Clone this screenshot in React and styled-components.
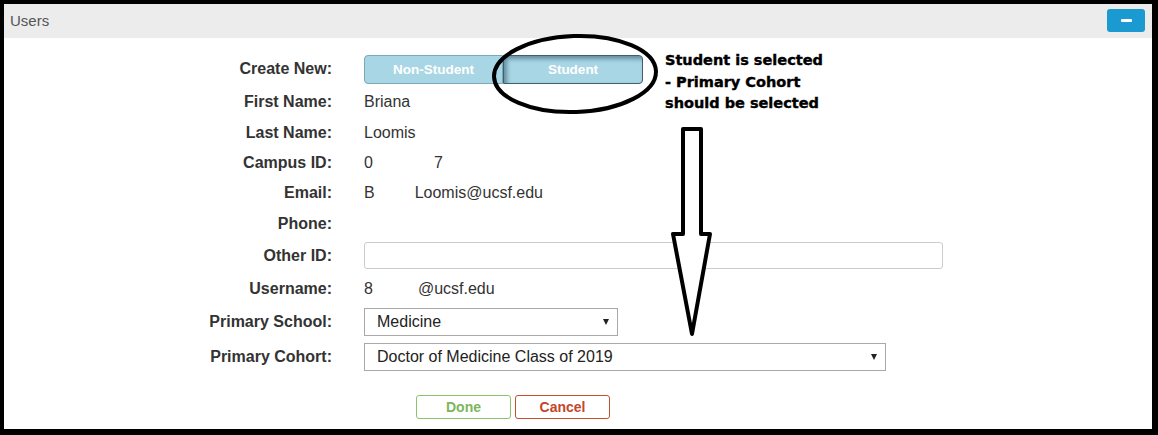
import React from "react";
import styled, { createGlobalStyle } from "styled-components";

const Global = createGlobalStyle`
  html, body {
    margin: 0;
    padding: 0;
    background: #fff;
  }
  * {
    box-sizing: border-box;
  }
`;

const Frame = styled.div`
  position: relative;
  width: 1158px;
  height: 435px;
  border-style: solid;
  border-color: #000;
  border-width: 4px 6px 6px 4px;
  background: #fff;
  font-family: "Liberation Sans", Arial, sans-serif;
  color: #333;
  overflow: hidden;
`;

const Header = styled.div`
  height: 34px;
  background: #ececec;
  display: flex;
  align-items: center;
  justify-content: space-between;
  padding: 0 7px 2px 6px;
  .title {
    font-size: 15px;
    color: #555;
  }
`;

const MinusButton = styled.button`
  width: 38px;
  height: 23px;
  border: 0;
  border-radius: 3px;
  background: #1a9ad0;
  display: flex;
  align-items: center;
  justify-content: center;
  padding: 0;
  span {
    display: block;
    width: 11px;
    height: 3px;
    background: #fff;
    border-radius: 1px;
  }
`;

const Form = styled.div`
  padding-top: 14px;
`;

const Row = styled.div`
  display: flex;
  align-items: center;
  height: ${(p) => p.$h}px;
`;

const Label = styled.div`
  box-sizing: content-box;
  width: 328px;
  padding-right: 32px;
  flex-shrink: 0;
  text-align: right;
  font-size: 16px;
  font-weight: 700;
  color: #333;
`;

const Value = styled.div`
  font-size: 16px;
  color: #333;
  display: flex;
  align-items: center;
`;

const Blank = styled.span`
  display: inline-block;
  width: ${(p) => p.$w}px;
`;

const Toggle = styled.div`
  display: flex;
`;

const ToggleButton = styled.div`
  width: ${(p) => p.$w}px;
  height: 29px;
  display: flex;
  align-items: center;
  justify-content: center;
  background: #a9d6e5;
  color: #fff;
  font-size: 13.5px;
  font-weight: 700;
  border: 1px solid ${(p) => (p.$active ? "#3f5f6c" : "#7ba9b9")};
  border-radius: ${(p) => (p.$first ? "4px 0 0 4px" : "0 4px 4px 0")};
  box-shadow: ${(p) =>
    p.$active ? "inset 3px 3px 4px rgba(40, 80, 100, 0.55)" : "none"};
`;

const TextInput = styled.div`
  width: 579px;
  height: 27px;
  border: 1px solid #ccc;
  border-radius: 3px;
  background: #fff;
`;

const Select = styled.div`
  width: ${(p) => p.$w}px;
  height: 28px;
  border: 1px solid #a9a9a9;
  background: #fff;
  display: flex;
  align-items: center;
  justify-content: space-between;
  padding: 0 8px 0 12px;
  font-size: 16px;
  color: #222;
`;

const Caret = styled.span`
  width: 0;
  height: 0;
  border-left: 3.5px solid transparent;
  border-right: 3.5px solid transparent;
  border-top: 6px solid #222;
`;

const Actions = styled.div`
  display: flex;
  gap: 4px;
  padding-left: 412px;
  margin-top: 21px;
`;

const ActionButton = styled.button`
  width: 95px;
  height: 24px;
  background: #fff;
  border: 1px solid ${(p) => p.$border};
  border-radius: 3px;
  color: ${(p) => p.$color};
  font-family: "Liberation Sans", Arial, sans-serif;
  font-size: 14px;
  font-weight: 700;
  padding: 0;
`;

const Overlay = styled.div`
  position: absolute;
  top: -4px;
  left: -4px;
  width: 1158px;
  height: 435px;
  pointer-events: none;
  svg {
    position: absolute;
    top: 0;
    left: 0;
  }
`;

const Note = styled.div`
  position: absolute;
  left: 665px;
  top: 50px;
  font-family: "DejaVu Sans", Verdana, sans-serif;
  font-weight: 700;
  font-size: 14.5px;
  line-height: 21.5px;
  color: #000;
  -webkit-text-stroke: 0.4px #000;
`;

function Annotation() {
  return (
    <Overlay>
      <svg width="1158" height="435" viewBox="0 0 1158 435">
        <ellipse
          cx="575"
          cy="74"
          rx="81"
          ry="38"
          fill="none"
          stroke="#000"
          strokeWidth="4"
          transform="rotate(-2 575 74)"
        />
        <polygon
          points="683,129 701,129 701,234 710,234 692,334 673,234 683,234"
          fill="#fff"
          stroke="#000"
          strokeWidth="4"
          strokeLinejoin="round"
        />
      </svg>
      <Note>
        Student is selected
        <br />- Primary Cohort
        <br />
        should be selected
      </Note>
    </Overlay>
  );
}

export default function App() {
  return (
    <>
      <Global />
      <Frame>
        <Header>
          <span className="title">Users</span>
          <MinusButton>
            <span />
          </MinusButton>
        </Header>

        <Form>
          <Row $h={34}>
            <Label>Create New:</Label>
            <Toggle>
              <ToggleButton $w={139} $first>
                Non-Student
              </ToggleButton>
              <ToggleButton $w={140} $active>
                Student
              </ToggleButton>
            </Toggle>
          </Row>
          <Row $h={31}>
            <Label>First Name:</Label>
            <Value>Briana</Value>
          </Row>
          <Row $h={31}>
            <Label>Last Name:</Label>
            <Value>Loomis</Value>
          </Row>
          <Row $h={30}>
            <Label>Campus ID:</Label>
            <Value>
              0<Blank $w={61} />7
            </Value>
          </Row>
          <Row $h={30}>
            <Label>Email:</Label>
            <Value>
              B<Blank $w={40} />
              Loomis@ucsf.edu
            </Value>
          </Row>
          <Row $h={31}>
            <Label>Phone:</Label>
            <Value />
          </Row>
          <Row $h={33}>
            <Label>Other ID:</Label>
            <TextInput />
          </Row>
          <Row $h={33}>
            <Label>Username:</Label>
            <Value>
              8<Blank $w={45} />
              @ucsf.edu
            </Value>
          </Row>
          <Row $h={34}>
            <Label>Primary School:</Label>
            <Select $w={254}>
              Medicine
              <Caret />
            </Select>
          </Row>
          <Row $h={35}>
            <Label>Primary Cohort:</Label>
            <Select $w={522}>
              Doctor of Medicine Class of 2019
              <Caret />
            </Select>
          </Row>

          <Actions>
            <ActionButton $border="#8cc46c" $color="#7cb65d">
              Done
            </ActionButton>
            <ActionButton $border="#c4502f" $color="#c4462a">
              Cancel
            </ActionButton>
          </Actions>
        </Form>

        <Annotation />
      </Frame>
    </>
  );
}
